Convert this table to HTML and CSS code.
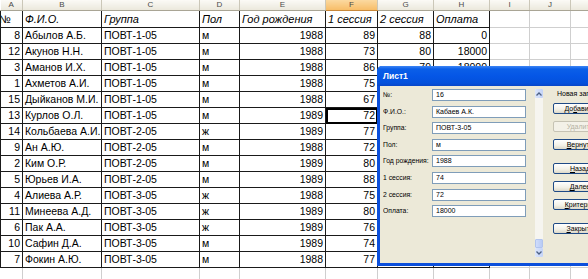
FILE: index.html
```html
<!DOCTYPE html>
<html lang="ru">
<head>
<meta charset="utf-8">
<link rel="stylesheet" href="styles.css">
</head>
<body>
<table class="sheet">
  <colgroup>
    <col class="c-a"><col class="c-b"><col class="c-c"><col class="c-d"><col class="c-e"><col class="c-f"><col class="c-g"><col class="c-h"><col class="c-i"><col class="c-j"><col class="c-k">
  </colgroup>
  <tr class="letters">
    <th>A</th><th>B</th><th>C</th><th>D</th><th>E</th><th class="sel">F</th><th>G</th><th>H</th><th>I</th><th>J</th><th></th>
  </tr>
  <tr class="titles">
    <td class="no">№</td><td>Ф.И.О.</td><td>Группа</td><td>Пол</td><td>Год рождения</td><td>1 сессия</td><td>2 сессия</td><td>Оплата</td><td class="blank"></td><td class="blank"></td><td class="blank"></td>
  </tr>
  <tr><td class="n">8</td><td>Абылов А.Б.</td><td>ПОВТ-1-05</td><td>м</td><td class="n">1988</td><td class="n">89</td><td class="n">88</td><td class="n">0</td><td class="blank"></td><td class="blank"></td><td class="blank"></td></tr>
  <tr><td class="n">12</td><td>Акунов Н.Н.</td><td>ПОВТ-1-05</td><td>м</td><td class="n">1988</td><td class="n">73</td><td class="n">80</td><td class="n">18000</td><td class="blank"></td><td class="blank"></td><td class="blank"></td></tr>
  <tr><td class="n">3</td><td>Аманов И.Х.</td><td>ПОВТ-1-05</td><td>м</td><td class="n">1988</td><td class="n">86</td><td class="n">79</td><td class="n">18000</td><td class="blank"></td><td class="blank"></td><td class="blank"></td></tr>
  <tr><td class="n">1</td><td>Ахметов А.И.</td><td>ПОВТ-1-05</td><td>м</td><td class="n">1988</td><td class="n">75</td><td class="n">80</td><td class="n">18000</td><td class="blank"></td><td class="blank"></td><td class="blank"></td></tr>
  <tr><td class="n">15</td><td>Дыйканов М.И.</td><td>ПОВТ-1-05</td><td>м</td><td class="n">1988</td><td class="n">67</td><td class="n">70</td><td class="n">18000</td><td class="blank"></td><td class="blank"></td><td class="blank"></td></tr>
  <tr><td class="n">13</td><td>Курлов О.Л.</td><td>ПОВТ-1-05</td><td>м</td><td class="n">1989</td><td class="n active">72</td><td class="n">75</td><td class="n">18000</td><td class="blank"></td><td class="blank"></td><td class="blank"></td></tr>
  <tr><td class="n">14</td><td>Кольбаева А.И.</td><td>ПОВТ-2-05</td><td>ж</td><td class="n">1989</td><td class="n">77</td><td class="n">80</td><td class="n">18000</td><td class="blank"></td><td class="blank"></td><td class="blank"></td></tr>
  <tr><td class="n">9</td><td>Ан А.Ю.</td><td>ПОВТ-2-05</td><td>м</td><td class="n">1988</td><td class="n">72</td><td class="n">74</td><td class="n">18000</td><td class="blank"></td><td class="blank"></td><td class="blank"></td></tr>
  <tr><td class="n">2</td><td>Ким О.Р.</td><td>ПОВТ-2-05</td><td>м</td><td class="n">1989</td><td class="n">80</td><td class="n">82</td><td class="n">18000</td><td class="blank"></td><td class="blank"></td><td class="blank"></td></tr>
  <tr><td class="n">5</td><td>Юрьев И.А.</td><td>ПОВТ-2-05</td><td>м</td><td class="n">1989</td><td class="n">88</td><td class="n">85</td><td class="n">18000</td><td class="blank"></td><td class="blank"></td><td class="blank"></td></tr>
  <tr><td class="n">4</td><td>Алиева А.Р.</td><td>ПОВТ-3-05</td><td>ж</td><td class="n">1988</td><td class="n">75</td><td class="n">78</td><td class="n">18000</td><td class="blank"></td><td class="blank"></td><td class="blank"></td></tr>
  <tr><td class="n">11</td><td>Минеева А.Д.</td><td>ПОВТ-3-05</td><td>ж</td><td class="n">1989</td><td class="n">80</td><td class="n">77</td><td class="n">18000</td><td class="blank"></td><td class="blank"></td><td class="blank"></td></tr>
  <tr><td class="n">6</td><td>Пак А.А.</td><td>ПОВТ-3-05</td><td>ж</td><td class="n">1989</td><td class="n">76</td><td class="n">79</td><td class="n">18000</td><td class="blank"></td><td class="blank"></td><td class="blank"></td></tr>
  <tr><td class="n">10</td><td>Сафин Д.А.</td><td>ПОВТ-3-05</td><td>м</td><td class="n">1989</td><td class="n">74</td><td class="n">73</td><td class="n">18000</td><td class="blank"></td><td class="blank"></td><td class="blank"></td></tr>
  <tr><td class="n">7</td><td>Фокин А.Ю.</td><td>ПОВТ-3-05</td><td>м</td><td class="n">1988</td><td class="n">77</td><td class="n">72</td><td class="n">18000</td><td class="blank"></td><td class="blank"></td><td class="blank"></td></tr>
  <tr class="empty"><td></td><td></td><td></td><td></td><td></td><td></td><td></td><td></td><td></td><td></td><td></td></tr>
</table>

<div class="dlg">
  <div class="title">Лист1</div>
  <div class="body">
    <div class="fields">
      <label>№:</label><div class="box">16</div>
      <label>Ф.И.О.:</label><div class="box">Кабаев А.К.</div>
      <label>Группа:</label><div class="box">ПОВТ-3-05</div>
      <label>Пол:</label><div class="box">м</div>
      <label>Год рождения:</label><div class="box">1988</div>
      <label>1 сессия:</label><div class="box">74</div>
      <label>2 сессия:</label><div class="box">72</div>
      <label>Оплата:</label><div class="box">18000</div>
    </div>
    <div class="scroll">
      <div class="arrow"><svg width="6" height="4" viewBox="0 0 6 4"><path d="M0.5 3.5 L3 1 L5.5 3.5" fill="none" stroke="#4d6185" stroke-width="1.3"/></svg></div>
      <div class="track"></div>
      <div class="thumb"></div>
      <div class="arrow"><svg width="6" height="4" viewBox="0 0 6 4"><path d="M0.5 0.5 L3 3 L5.5 0.5" fill="none" stroke="#4d6185" stroke-width="1.3"/></svg></div>
    </div>
    <div class="buttons">
      <div class="newrec">Новая запись</div>
      <div class="btn">До<u>б</u>авить</div>
      <div class="btn off">Удалить</div>
      <div class="btn"><u>В</u>ернуть</div>
      <div class="btn grp"><u>Н</u>азад</div>
      <div class="btn"><u>Д</u>алее</div>
      <div class="btn"><u>К</u>ритерии</div>
      <div class="btn grp"><u>З</u>акрыть</div>
    </div>
  </div>
</div>
</body>
</html>
```

FILE: styles.css
```css
html, body {
  margin: 0;
  padding: 0;
}
body {
  width: 588px;
  height: 279px;
  overflow: hidden;
  position: relative;
  background: #fff;
  font-family: "Liberation Sans", Arial, sans-serif;
}

.sheet {
  border-collapse: collapse;
  table-layout: fixed;
  width: 618px;
}
.c-a { width: 22px; }
.c-b { width: 79px; }
.c-c { width: 98px; }
.c-d { width: 40px; }
.c-e { width: 86px; }
.c-f { width: 52px; }
.c-g { width: 56px; }
.c-h { width: 56px; }
.c-i { width: 40px; }
.c-j { width: 41px; }
.c-k { width: 48px; }

.letters th {
  height: 10px;
  padding: 0;
  font-size: 8px;
  line-height: 10px;
  font-weight: normal;
  color: #4a4a4a;
  background: linear-gradient(#fbfaf6, #ebe8dc);
  border-right: 1px solid #cbc7b8;
  border-bottom: 1px solid #a9a595;
  text-align: center;
}
.letters th.sel {
  background: linear-gradient(#fbd9a0, #f7bd68);
  border-bottom-color: #c8883a;
}

.sheet td {
  height: 15px;
  padding: 0 2px;
  border: 1px solid #1a1a1a;
  font-size: 10.5px;
  line-height: 15px;
  color: #000;
  white-space: nowrap;
  overflow: hidden;
}
.sheet td.n {
  text-align: right;
}
.sheet td.blank {
  border: none;
  border-right: 1px solid #cfcfcf;
  border-bottom: 1px solid #cfcfcf;
}
.titles td {
  height: 16px;
  font-style: italic;
  font-size: 11px;
  line-height: 16px;
}
.titles td.no {
  padding-left: 0;
  text-indent: -2px;
  font-style: normal;
}
.sheet td.active {
  outline: 2px solid #000;
  outline-offset: -2px;
}
.empty td {
  border: none;
  border-right: 1px solid #cfcfcf;
  border-bottom: 1px solid #cfcfcf;
}

/* dialog */
.dlg {
  position: absolute;
  left: 377px;
  top: 66px;
  width: 244px;
  background: #0b4fdc;
  padding: 0 3px 3px 3px;
  border-radius: 5px 5px 0 0;
  font-family: "Liberation Sans", Arial, sans-serif;
}
.title {
  height: 20px;
  margin: 0 -3px;
  padding-left: 6px;
  color: #fff;
  font-weight: bold;
  font-size: 8.5px;
  line-height: 21px;
  border-radius: 5px 5px 0 0;
  background: linear-gradient(#3d85f5 0, #0b5fe8 3px, #0556e6 50%, #0451dc 85%, #0846c8 100%);
}
.body {
  background: #ece9d8;
  display: flex;
  padding: 3px 0 0 3px;
  box-sizing: border-box;
  height: 177px;
}
.fields {
  display: grid;
  grid-template-columns: 49px 94px;
  grid-auto-rows: 12px;
  row-gap: 4.6px;
  align-content: start;
}
.fields label {
  font-size: 6.8px;
  line-height: 12px;
  color: #000;
  white-space: nowrap;
  overflow: hidden;
}
.box {
  box-sizing: border-box;
  border: 1px solid #7f9db9;
  background: #fff;
  font-size: 7px;
  line-height: 10px;
  padding-left: 3px;
  color: #000;
}
.scroll {
  margin-left: 9px;
  width: 8px;
  height: 168px;
  display: flex;
  flex-direction: column;
  background: #f6f5f0;
}
.scroll .arrow {
  height: 9px;
  background: linear-gradient(90deg, #dce6fb, #c3d3f8);
  border-radius: 1px;
  display: flex;
  align-items: center;
  justify-content: center;
}
.scroll .track {
  flex: 1;
}
.scroll .thumb {
  height: 9px;
  background: linear-gradient(90deg, #cfdcfb, #b8cbf5);
  border: 1px solid #b1c4ee;
  box-sizing: border-box;
  border-radius: 1px;
}
.buttons {
  margin-left: 10px;
  width: 54px;
  display: flex;
  flex-direction: column;
  gap: 7px;
}
.newrec {
  font-size: 7px;
  line-height: 8px;
  margin: 1px 0 -2px 4px;
  white-space: nowrap;
}
.btn {
  height: 11px;
  box-sizing: border-box;
  border: 1px solid #1f4a86;
  border-radius: 2px;
  background: linear-gradient(#ffffff, #f2f0e6 60%, #dcd8c9);
  font-size: 7px;
  line-height: 9px;
  text-align: center;
  color: #000;
  white-space: nowrap;
}
.btn.off {
  color: #b5b2a3;
  border-color: #c6c3b4;
  background: #f3f1e8;
}
.btn.grp {
  margin-top: 6px;
}
```
